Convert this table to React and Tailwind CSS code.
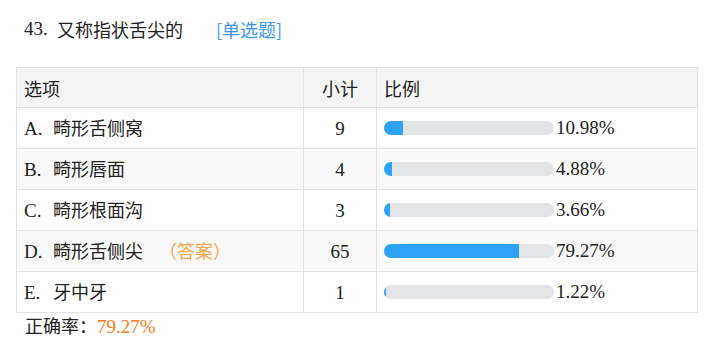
import React from "react";

const rows = [
    { label: "A", text: "畸形舌侧窝", count: 9, pct: 10.98 },
    { label: "B", text: "畸形唇面", count: 4, pct: 4.88 },
    { label: "C", text: "畸形根面沟", count: 3, pct: 3.66 },
    { label: "D", text: "畸形舌侧尖", count: 65, pct: 79.27, answer: true },
    { label: "E", text: "牙中牙", count: 1, pct: 1.22 },
];

// digits / latin letters in a serif face, a bit bigger, to look like the original song-style glyphs
const Num = ({ children, className = "" }) => (
    <span className={`font-['Liberation_Serif',serif] text-[19px] ${className}`}>{children}</span>
);

const App = () => {
    return (
        <div className="w-[714px] h-[350px] bg-white text-[#222] text-[18px] font-['Noto_Sans_CJK_SC',sans-serif] overflow-hidden">
            {/* question title */}
            <div className="h-[58px] flex items-center pl-[24px] leading-[24px]">
                <Num className="inline-block w-[33px]">43.</Num>
                <span>又称指状舌尖的</span>
                <span className="ml-[33px] text-[#3d9bf5]">[单选题]</span>
            </div>

            <div className="px-[16px] mt-[9px]">
                <table className="w-[682px] border-collapse table-fixed">
                    <colgroup>
                        <col className="w-[287px]" />
                        <col className="w-[73px]" />
                        <col />
                    </colgroup>
                    <thead>
                        <tr className="bg-[#f4f4f4] h-[40px]">
                            <th className="border border-[#e2e2e2] font-normal text-left pl-[7px] leading-[24px]">选项</th>
                            <th className="border border-[#e2e2e2] font-normal text-center leading-[24px]">小计</th>
                            <th className="border border-[#e2e2e2] font-normal text-left pl-[7px] leading-[24px]">比例</th>
                        </tr>
                    </thead>
                    <tbody>
                        {rows.map((row, i) => (
                            <tr key={row.label} className={`h-[41px] ${i % 2 === 1 ? "bg-[#f9f9f9]" : "bg-white"}`}>
                                <td className="border border-[#e2e2e2] pl-[7px] leading-[24px] whitespace-nowrap">
                                    <Num className="inline-block w-[29px]">{row.label}.</Num>
                                    <span>{row.text}</span>
                                    {row.answer && <span className="ml-[16px] text-[#f6a84a]">（答案）</span>}
                                </td>
                                <td className="border border-[#e2e2e2] text-center leading-[24px]">
                                    <Num>{row.count}</Num>
                                </td>
                                <td className="border border-[#e2e2e2] pl-[7px] leading-[24px]">
                                    <div className="flex items-center">
                                        <div className="w-[170px] h-[14px] rounded-full bg-[#e3e4e6] overflow-hidden">
                                            <div className="h-full bg-[#2da2f6]" style={{ width: `${row.pct}%` }} />
                                        </div>
                                        <Num className="ml-[2px]">{row.pct.toFixed(2)}%</Num>
                                    </div>
                                </td>
                            </tr>
                        ))}
                    </tbody>
                </table>
                <div className="pl-[9px] leading-[24px]">
                    <span>正确率：</span>
                    <Num className="text-[#ff7a1a]">79.27%</Num>
                </div>
            </div>
        </div>
    );
};

export default App;
